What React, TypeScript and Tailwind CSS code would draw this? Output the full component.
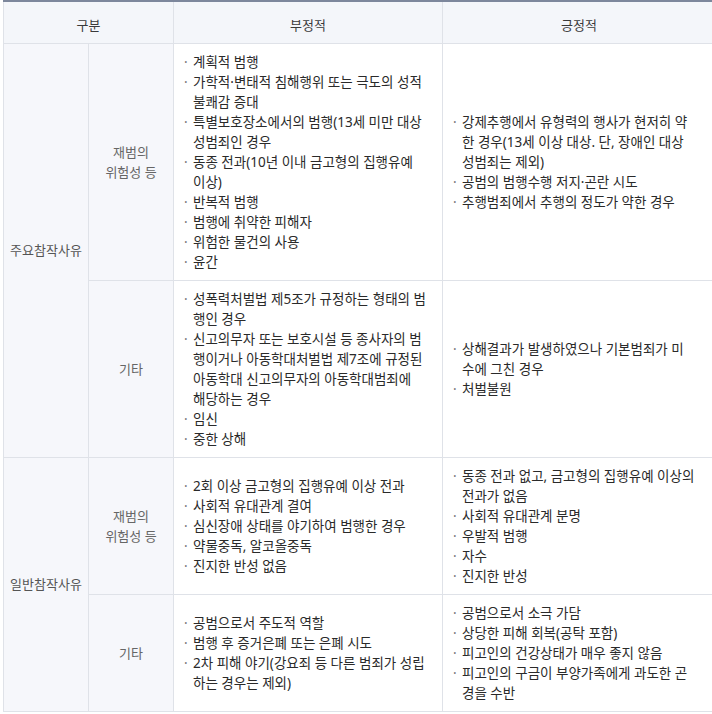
import React from 'react';

type Row = {
  group?: string;
  groupSpan?: number;
  label: string[];
  negative: string[];
  positive: string[];
};

const rows: Row[] = [
  {
    group: '주요참작사유',
    groupSpan: 2,
    label: ['재범의', '위험성 등'],
    negative: [
      '계획적 범행',
      '가학적·변태적 침해행위 또는 극도의 성적\n불쾌감 증대',
      '특별보호장소에서의 범행(13세 미만 대상\n성범죄인 경우',
      '동종 전과(10년 이내 금고형의 집행유예\n이상)',
      '반복적 범행',
      '범행에 취약한 피해자',
      '위험한 물건의 사용',
      '윤간'
    ],
    positive: [
      '강제추행에서 유형력의 행사가 현저히 약\n한 경우(13세 이상 대상. 단, 장애인 대상\n성범죄는 제외)',
      '공범의 범행수행 저지·곤란 시도',
      '추행범죄에서 추행의 정도가 약한 경우'
    ]
  },
  {
    label: ['기타'],
    negative: [
      '성폭력처벌법 제5조가 규정하는 형태의 범\n행인 경우',
      '신고의무자 또는 보호시설 등 종사자의 범\n행이거나 아동학대처벌법 제7조에 규정된\n아동학대 신고의무자의 아동학대범죄에\n해당하는 경우',
      '임신',
      '중한 상해'
    ],
    positive: ['상해결과가 발생하였으나 기본범죄가 미\n수에 그친 경우', '처벌불원']
  },
  {
    group: '일반참작사유',
    groupSpan: 2,
    label: ['재범의', '위험성 등'],
    negative: [
      '2회 이상 금고형의 집행유예 이상 전과',
      '사회적 유대관계 결여',
      '심신장애 상태를 야기하여 범행한 경우',
      '약물중독, 알코올중독',
      '진지한 반성 없음'
    ],
    positive: [
      '동종 전과 없고, 금고형의 집행유예 이상의\n전과가 없음',
      '사회적 유대관계 분명',
      '우발적 범행',
      '자수',
      '진지한 반성'
    ]
  },
  {
    label: ['기타'],
    negative: [
      '공범으로서 주도적 역할',
      '범행 후 증거은폐 또는 은폐 시도',
      '2차 피해 야기(강요죄 등 다른 범죄가 성립\n하는 경우는 제외)'
    ],
    positive: [
      '공범으로서 소극 가담',
      '상당한 피해 회복(공탁 포함)',
      '피고인의 건강상태가 매우 좋지 않음',
      '피고인의 구금이 부양가족에게 과도한 곤\n경을 수반'
    ]
  }
];

const BulletList = ({ items }: { items: string[] }) => (
  <ul>
    {items.map((item, index) => (
      <li key={index} className="flex">
        <span className="w-[9px] shrink-0 text-left text-[#777]">·</span>
        <span className="whitespace-pre">{item}</span>
      </li>
    ))}
  </ul>
);

const App = () => {
  return (
    <div className="h-[714px] w-[712px] overflow-hidden bg-white pl-[3px] font-['Noto_Sans','Noto_Sans_CJK_KR',sans-serif] text-[13px] leading-[20px] text-[#2a2a2a]">
      <table className="w-[712px] table-fixed border-collapse border-t-2 border-t-[#7d879c]">
        <colgroup>
          <col className="w-[85px]" />
          <col className="w-[85px]" />
          <col className="w-[269px]" />
          <col className="w-[273px]" />
        </colgroup>
        <thead>
          <tr className="h-[42px] bg-[#f4f6fa]">
            <th colSpan={2} className="border border-[#dfe2e8] pt-[5px] font-normal text-[#3a3a3a]">
              구분
            </th>
            <th className="border border-[#dfe2e8] pt-[5px] font-normal text-[#3a3a3a]">부정적</th>
            <th className="border border-[#dfe2e8] pt-[5px] font-normal text-[#3a3a3a]">긍정적</th>
          </tr>
        </thead>
        <tbody>
          {rows.map((row, index) => (
            <tr key={index}>
              {row.group && (
                <td
                  rowSpan={row.groupSpan}
                  className="border border-[#dfe2e8] bg-[#f6f7fb] text-center text-[#555]">
                  {row.group}
                </td>
              )}
              <td className="border border-[#dfe2e8] bg-[#f6f7fb] text-center text-[#666]">
                {row.label.map((line, i) => (
                  <div key={i}>{line}</div>
                ))}
              </td>
              <td className="border border-[#dfe2e8] py-2 pl-[10px] pr-2 text-[13.5px]">
                <BulletList items={row.negative} />
              </td>
              <td className="border border-[#dfe2e8] py-2 pl-[10px] pr-2 text-[13.5px]">
                <BulletList items={row.positive} />
              </td>
            </tr>
          ))}
        </tbody>
      </table>
    </div>
  );
};

export default App;
